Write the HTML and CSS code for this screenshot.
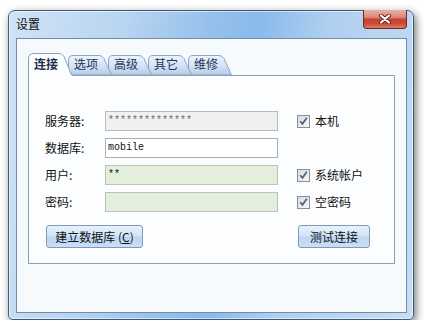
FILE: index.html
```html
<!DOCTYPE html>
<html lang="zh">
<head>
<meta charset="utf-8">
<title>设置</title>
<link rel="stylesheet" href="styles.css">
</head>
<body>
<div class="window">
  <div class="titlebar">
    <span class="title">设置</span>
    <div class="close">
      <svg width="14" height="10" viewBox="0 0 14 10"><path d="M3 1.5 L11 8.5 M11 1.5 L3 8.5" stroke="#5a2020" stroke-width="4" stroke-linecap="round"/><path d="M3 1.5 L11 8.5 M11 1.5 L3 8.5" stroke="#ffffff" stroke-width="2.2" stroke-linecap="round"/></svg>
    </div>
  </div>
  <div class="client">
    <div class="tabs">
      <div class="tab active">连接</div>
      <div class="tab t2">选项</div>
      <div class="tab t3">高级</div>
      <div class="tab t4">其它</div>
      <div class="tab t5">维修</div>
    </div>
    <div class="panel">
      <div class="form">
        <span class="label">服务器:</span>
        <div class="input disabled">**************</div>
        <label class="check"><span class="box"></span>本机</label>

        <span class="label">数据库:</span>
        <div class="input">mobile</div>
        <span></span>

        <span class="label">用户:</span>
        <div class="input green dark">**</div>
        <label class="check"><span class="box"></span>系统帐户</label>

        <span class="label">密码:</span>
        <div class="input green"></div>
        <label class="check"><span class="box"></span>空密码</label>
      </div>
      <div class="buttons">
        <button class="btn wide">建立数据库 (<u>C</u>)</button>
        <button class="btn">测试连接</button>
      </div>
    </div>
  </div>
</div>
</body>
</html>
```
FILE: styles.css
```css
html, body {
  margin: 0;
  padding: 0;
  background: #ffffff;
}
body {
  font-family: "Noto Sans CJK SC", "Noto Sans", sans-serif;
  font-size: 12px;
  color: #111111;
}
.window {
  margin: 10px 0 0 8px;
  width: 406px;
  height: 310px;
  box-sizing: border-box;
  border: 1px solid #3d5a7a;
  border-radius: 7px 7px 5px 5px;
  padding: 0 6px 6px 7px;
  display: flex;
  flex-direction: column;
  background: linear-gradient(100deg, #d0e3f5 0%, #b9d5f1 25%, #95c0ec 45%, #8ab9ea 55%, #afcff0 70%, #c6ddf3 100%);
  box-shadow: 2px 3px 9px rgba(0,0,0,0.55), inset 0 0 0 1px rgba(255,255,255,0.55);
}
.titlebar {
  height: 27px;
  display: flex;
  justify-content: space-between;
  align-items: flex-start;
}
.title {
  padding-top: 6px;
  line-height: 14px;
  color: #111;
}
.close {
  margin-top: -1px;
  width: 44px;
  height: 19px;
  box-sizing: border-box;
  border: 1px solid #6e2a22;
  border-top: none;
  border-radius: 0 0 4px 4px;
  background: linear-gradient(#eab0a4 0%, #dc8878 40%, #c2432f 52%, #c94a36 75%, #e07a62 100%);
  display: flex;
  align-items: center;
  justify-content: center;
}
.client {
  flex: 1;
  border: 1px solid #6f8cab;
  background: #f6fafc;
  padding: 14px 0 0 11px;
}
.tabs {
  display: flex;
  height: 22px;
  position: relative;
  z-index: 2;
}
.tab {
  width: 44px;
  height: 22px;
  margin-right: -4px;
  box-sizing: border-box;
  padding: 3px 0 0 6px;
  line-height: 16px;
  color: #1d355c;
  background-repeat: no-repeat;
  background-image: url("data:image/svg+xml,%3Csvg xmlns='http://www.w3.org/2000/svg' width='44' height='22'%3E%3ClinearGradient id='g' x1='0' y1='0' x2='0' y2='1'%3E%3Cstop offset='0' stop-color='%23eef4fb'/%3E%3Cstop offset='0.55' stop-color='%23d3e3f4'/%3E%3Cstop offset='1' stop-color='%23b2cbe8'/%3E%3C/linearGradient%3E%3Cpath d='M0.5 22 V7 Q0.5 2.5 5 2.5 H31 Q34 2.5 36 5.5 L43.5 22 Z' fill='url(%23g)' stroke='%238ca7c5'/%3E%3C/svg%3E");
  position: relative;
}
.tab.active {
  font-weight: bold;
  color: #1c2f4a;
  height: 23px;
  padding-left: 6px;
  z-index: 10;
  background-image: url("data:image/svg+xml,%3Csvg xmlns='http://www.w3.org/2000/svg' width='44' height='23'%3E%3Cpath d='M0.5 23 V6 Q0.5 0.5 6 0.5 H31 Q34 0.5 36 3.5 L44 23 Z' fill='%23fbfdfe'/%3E%3Cpath d='M0.5 23 V6 Q0.5 0.5 6 0.5 H31 Q34 0.5 36 3.5 L43.5 22' fill='none' stroke='%238e9fb1'/%3E%3C/svg%3E");
}
.t2 { z-index: 5; }
.t3 { z-index: 4; }
.t4 { z-index: 3; }
.t5 { z-index: 2; }
.panel {
  width: 367px;
  height: 189px;
  box-sizing: border-box;
  border: 1px solid #8e9fb1;
  background: #fbfdfe;
  padding: 35px 0 0 16px;
}
.form {
  display: grid;
  grid-template-columns: 60px 173px auto;
  grid-auto-rows: 20px;
  row-gap: 7px;
  align-items: center;
}
.label {
  line-height: 20px;
}
.input {
  height: 20px;
  box-sizing: border-box;
  border: 1px solid #a7b0ba;
  background: #ffffff;
  font-family: "Liberation Mono", "DejaVu Sans Mono", monospace;
  font-size: 10px;
  line-height: 18px;
  padding-left: 2px;
  color: #111;
}
.input.disabled {
  background: #eff0f0;
  color: #6d6d6d;
  border-color: #b9bcbf;
}
.input.green {
  background: #e4eedd;
  border-color: #b8c4b4;
}
.check {
  margin-left: 19px;
  display: flex;
  align-items: center;
  gap: 5px;
  line-height: 16px;
}
.box {
  width: 13px;
  height: 13px;
  box-sizing: border-box;
  border: 1px solid #8e8f8f;
  background:
    url("data:image/svg+xml,%3Csvg xmlns='http://www.w3.org/2000/svg' width='11' height='11'%3E%3Cpath d='M2.2 5.2 L4.5 7.8 L8.8 1.8' fill='none' stroke='%234a5f8c' stroke-width='1.7'/%3E%3C/svg%3E") center no-repeat,
    linear-gradient(135deg, #d8dbe0, #f6f7f8);
}
.buttons {
  display: flex;
  justify-content: space-between;
  margin-top: 13px;
  padding: 0 24px 0 1px;
}
.btn {
  height: 23px;
  width: 72px;
  box-sizing: border-box;
  border: 1px solid #7f9ab6;
  border-radius: 3px;
  background: linear-gradient(#e7f1fb 0%, #d3e5f8 45%, #bcd6f3 55%, #c9dff6 100%);
  font-family: "Noto Sans CJK SC", "Noto Sans", sans-serif;
  font-size: 12px;
  color: #111;
  padding: 0;
  line-height: 20px;
}
.btn.wide {
  width: 97px;
}
.btn u {
  text-decoration: underline;
}
```
